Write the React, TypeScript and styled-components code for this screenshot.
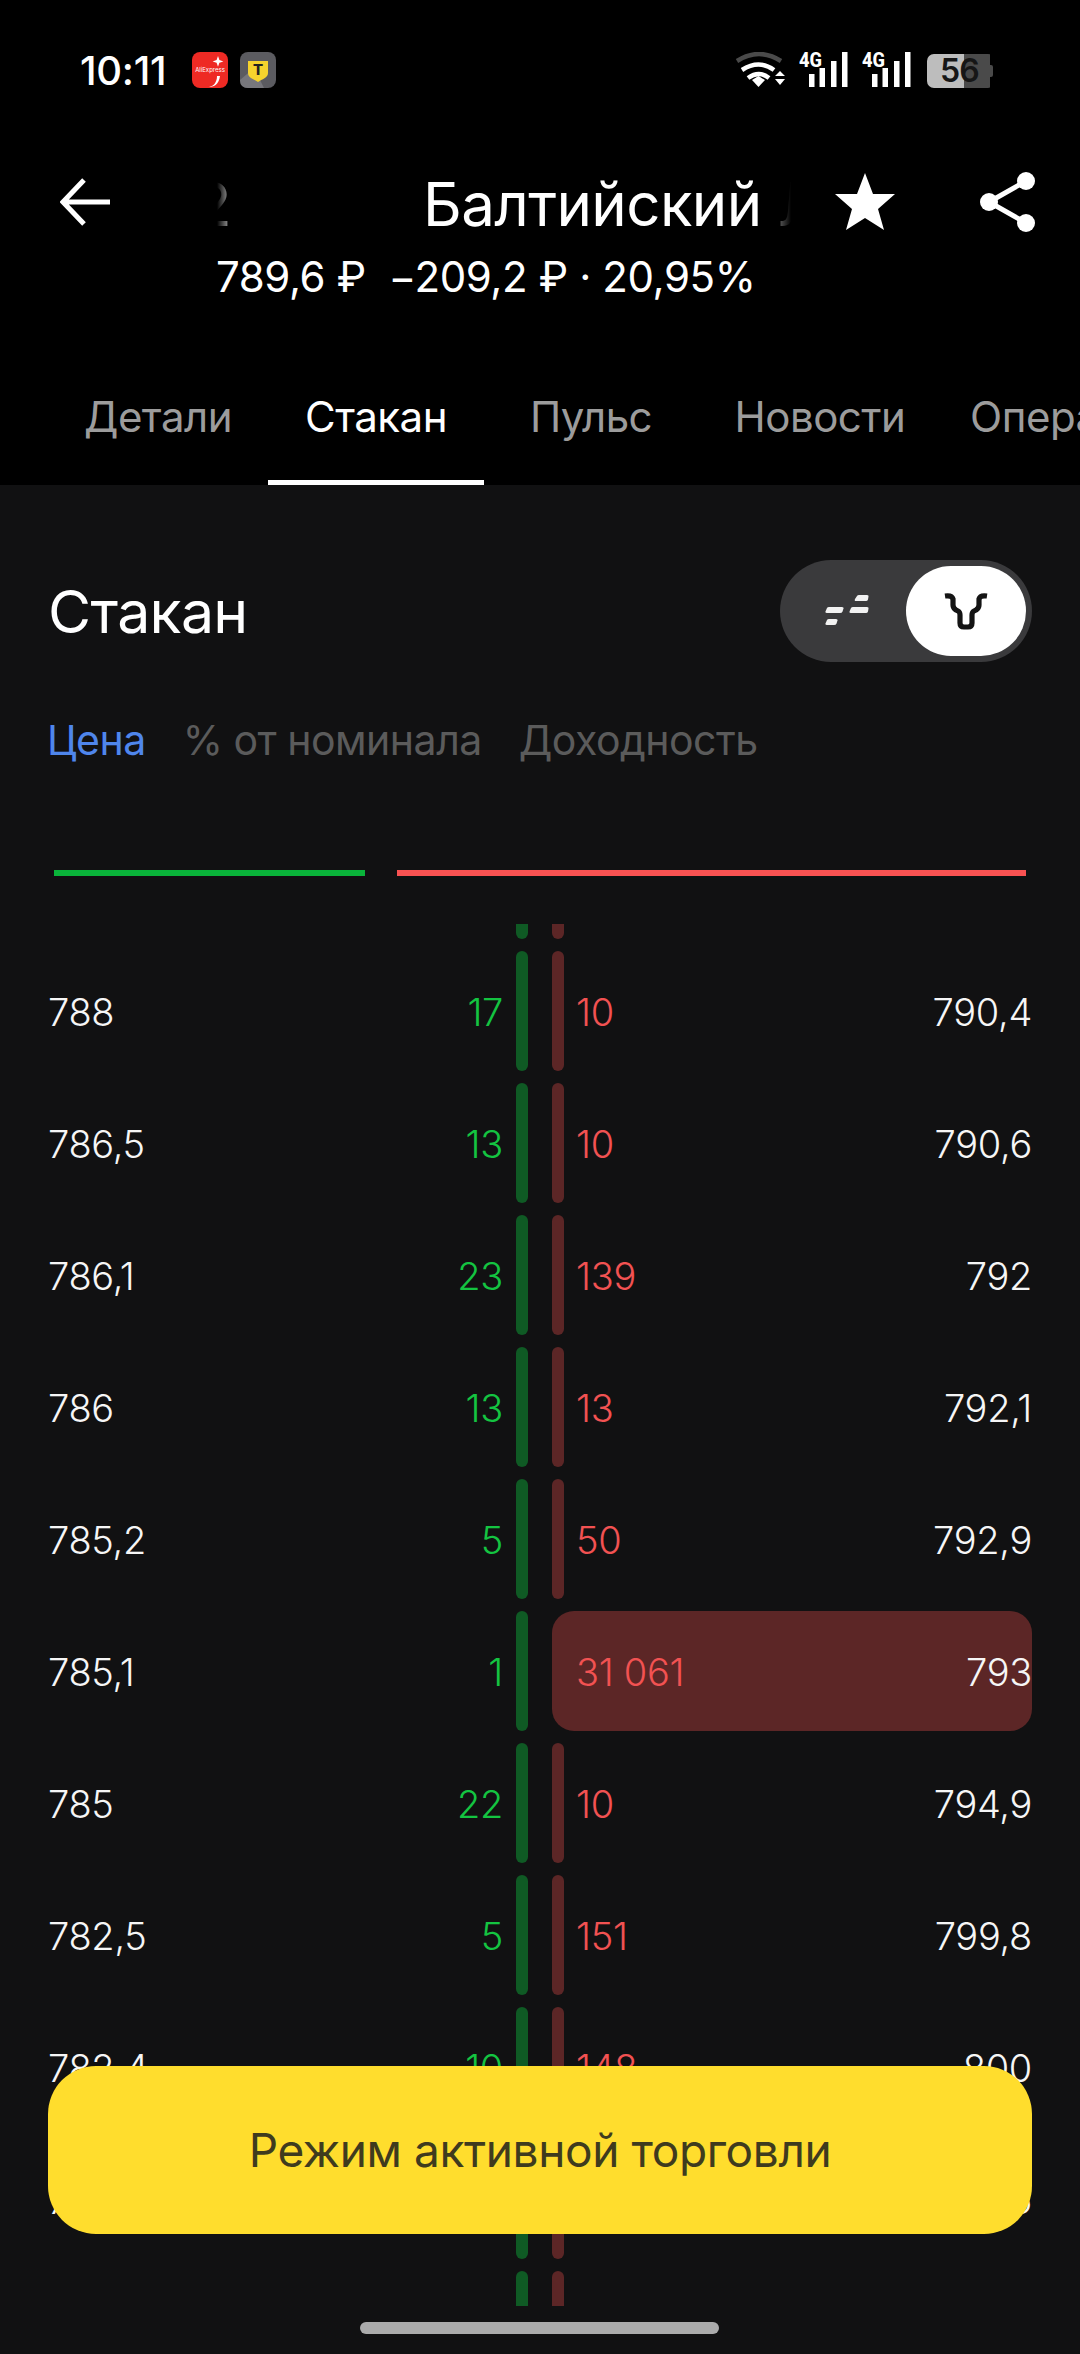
import React from "react"
import styled, { createGlobalStyle } from "styled-components"

const GlobalStyle = createGlobalStyle`
  html, body {
    margin: 0;
    padding: 0;
    background: #111112;
  }
  * { box-sizing: border-box; }
`

const Page = styled.div`
  position: relative;
  width: 1080px;
  height: 2354px;
  overflow: hidden;
  background: #111112;
  color: #fff;
  font-family: Inter, "Noto Sans", sans-serif;
`

const Header = styled.header`
  height: 485px;
  background: #000;
  display: flex;
  flex-direction: column;
`

const StatusBar = styled.div`
  height: 52px;
  margin-top: 52px;
  padding: 0 87px 0 80px;
  display: flex;
  align-items: flex-start;
  justify-content: space-between;
`

const StatusLeft = styled.div`
  display: flex;
  align-items: center;
  height: 36px;
`

const Clock = styled.span`
  width: 112px;
  font-size: 40px;
  font-weight: 500;
  letter-spacing: -0.3px;
`

const NotifyIcons = styled.div`
  display: flex;
  gap: 12px;
`

const StatusRight = styled.div`
  display: flex;
  align-items: flex-start;
  height: 36px;
  gap: 14px;
`

const Battery = styled.div`
  position: relative;
  width: 66px;
  height: 34px;
  margin-top: 2px;
  margin-left: 2px;
  border-radius: 7px 5px 5px 7px;
  background: linear-gradient(90deg, #bdbdbd 0 37px, #4a4a4a 37px 63px, transparent 63px);
  color: #161616;
  font-size: 32px;
  font-weight: 600;
  line-height: 34px;
  padding-left: 13px;
  letter-spacing: -1px;
  &::after {
    content: "";
    position: absolute;
    right: 0;
    top: 11px;
    width: 3px;
    height: 12px;
    border-radius: 0 2px 2px 0;
    background: #4a4a4a;
  }
`

const TopBar = styled.div`
  height: 84px;
  margin-top: 56px;
  display: flex;
  align-items: center;
  padding: 0 44px 0 60px;
`

const IconSlot = styled.div<{ $left: number }>`
  flex: none;
  display: flex;
  margin-left: ${p => p.$left}px;
`

const Marquee = styled.div`
  width: 574px;
  margin-left: 107px;
  height: 84px;
  padding-top: 4px;
  flex: none;
  overflow: hidden;
  white-space: nowrap;
  display: flex;
  align-items: center;
  font-size: 60px;
  font-weight: 400;
  letter-spacing: -0.6px;
  mask-image: linear-gradient(90deg, transparent 0, #000 20px, #000 540px, transparent 574px);
  -webkit-mask-image: linear-gradient(90deg, transparent 0, #000 20px, #000 540px, transparent 574px);
`

const MarqueeTail = styled.span`
  margin-left: -22px;
  margin-right: 192px;
`

const PriceLine = styled.div`
  margin: 7px 0 0 216px;
  height: 50px;
  display: flex;
  align-items: center;
  font-size: 42px;
  font-weight: 400;
  letter-spacing: -0.4px;
  white-space: pre;
`

const TabBar = styled.nav`
  margin-top: auto;
  height: 94px;
  display: flex;
  overflow: hidden;
  padding-left: 48px;
  white-space: nowrap;
`

const TabItem = styled.div<{ $active?: boolean; $width: number }>`
  flex: none;
  width: ${p => p.$width}px;
  height: 94px;
  padding-top: 2px;
  text-align: center;
  font-size: 42px;
  line-height: 48px;
  letter-spacing: -0.5px;
  color: ${p => (p.$active ? "#fff" : "#9c9c9c")};
  border-bottom: 5px solid ${p => (p.$active ? "#fff" : "transparent")};
`

const TitleRow = styled.div`
  margin-top: 75px;
  padding: 0 48px;
  height: 102px;
  display: flex;
  align-items: center;
  justify-content: space-between;
`

const Title = styled.h1`
  margin: 0;
  font-size: 59px;
  font-weight: 400;
  letter-spacing: -0.7px;
`

const Toggle = styled.div`
  width: 252px;
  height: 102px;
  border-radius: 51px;
  background: #3a3a3c;
  display: flex;
  align-items: center;
  justify-content: space-between;
  padding: 0 6px 0 45px;
`

const ToggleKnob = styled.div`
  width: 120px;
  height: 90px;
  border-radius: 45px;
  background: #fff;
  display: flex;
  align-items: center;
  justify-content: center;
`

const ModeRow = styled.div`
  margin-top: 53px;
  padding-left: 47px;
  height: 50px;
  display: flex;
  align-items: center;
  gap: 37px;
  font-size: 41px;
  letter-spacing: -0.5px;
`

const ModeItem = styled.span<{ $active?: boolean }>`
  color: ${p => (p.$active ? "#4f86ec" : "#5b5b5b")};
`

const Ratio = styled.div`
  margin: 105px 54px 0;
  display: flex;
  gap: 32px;
`

const RatioBar = styled.div<{ $color: string; $width: number }>`
  width: ${p => p.$width}px;
  height: 6px;
  background: ${p => p.$color};
`

const BookViewport = styled.div`
  margin-top: 48px;
  height: 1382px;
  overflow: hidden;
`

const BookScroll = styled.div`
  margin-top: -111px;
`

const BookRow = styled.div`
  height: 132px;
  padding: 0 48px;
  display: grid;
  grid-template-columns: 1fr 1fr;
  column-gap: 24px;
  font-size: 38px;
  font-weight: 350;
  letter-spacing: -0.3px;
`

const BidSide = styled.div`
  display: flex;
  align-items: center;
`

const AskSide = styled.div`
  position: relative;
  display: flex;
  align-items: center;
  justify-content: space-between;
  padding-left: 24px;
`

const Price = styled.span`
  position: relative;
  padding-top: 2px;
  color: #f6f6f6;
`

const BidQty = styled.span`
  margin-left: auto;
  margin-right: 13px;
  padding-top: 2px;
  color: #14c441;
`

const AskQty = styled.span`
  position: relative;
  padding-top: 2px;
  color: #f25252;
`

const BidBar = styled.div`
  width: 12px;
  height: 120px;
  border-radius: 6px;
  background: #0f5a24;
`

const AskDepth = styled.div<{ $wide?: boolean }>`
  position: absolute;
  left: 0;
  top: 6px;
  height: 120px;
  width: ${p => (p.$wide ? "100%" : "12px")};
  border-radius: ${p => (p.$wide ? "22px" : "6px")};
  background: #5c2626;
`

const TradeButton = styled.button`
  position: absolute;
  left: 48px;
  bottom: 120px;
  width: 984px;
  height: 168px;
  border: 0;
  border-radius: 48px;
  background: #ffdd2d;
  color: #3f3b1e;
  font-family: inherit;
  font-size: 46px;
  letter-spacing: -0.4px;
`

const HomeIndicator = styled.div`
  position: absolute;
  left: 360px;
  bottom: 20px;
  width: 359px;
  height: 12px;
  border-radius: 6px;
  background: #ababab;
`

type RowType = {
  bidPrice: string,
  bidQty: string,
  askQty: string,
  askPrice: string,
  wide?: boolean,
}

const rows: RowType[] = [
  { bidPrice: "", bidQty: "", askQty: "", askPrice: "" },
  { bidPrice: "788", bidQty: "17", askQty: "10", askPrice: "790,4" },
  { bidPrice: "786,5", bidQty: "13", askQty: "10", askPrice: "790,6" },
  { bidPrice: "786,1", bidQty: "23", askQty: "139", askPrice: "792" },
  { bidPrice: "786", bidQty: "13", askQty: "13", askPrice: "792,1" },
  { bidPrice: "785,2", bidQty: "5", askQty: "50", askPrice: "792,9" },
  { bidPrice: "785,1", bidQty: "1", askQty: "31 061", askPrice: "793", wide: true },
  { bidPrice: "785", bidQty: "22", askQty: "10", askPrice: "794,9" },
  { bidPrice: "782,5", bidQty: "5", askQty: "151", askPrice: "799,8" },
  { bidPrice: "782,4", bidQty: "10", askQty: "148", askPrice: "800" },
  { bidPrice: "782", bidQty: "", askQty: "", askPrice: "800,5" },
  { bidPrice: "", bidQty: "", askQty: "", askPrice: "" },
]

const tabs = [
  { name: "Детали", width: 220 },
  { name: "Стакан", width: 216, active: true },
  { name: "Пульс", width: 214 },
  { name: "Новости", width: 244 },
  { name: "Операции", width: 258 },
]

function AliIcon() {
  return (
    <svg width="36" height="36" viewBox="0 0 36 36">
      <rect width="36" height="36" rx="8" fill="#ee2a24" />
      <path d="M26 4 l1.4 4 4 1.4 -4 1.4 -1.4 4 -1.4 -4 -4 -1.4 4 -1.4z" fill="#fff" />
      <text x="18" y="20" fontSize="6" fill="#fff" textAnchor="middle" fontFamily="Inter, sans-serif">AliExpress</text>
      <path d="M25 24 C25 30 22 34 17 35 C21 35 27 33 28 24z" fill="#fff" />
    </svg>
  )
}

function BankIcon() {
  return (
    <svg width="36" height="36" viewBox="0 0 36 36">
      <rect width="36" height="36" rx="8" fill="#5b5b60" />
      <path d="M0 28 L14 16 L24 36 H8 Q0 36 0 28z" fill="#77777c" />
      <path d="M8 9 H28 V21 C28 26 22 27 18 30 C14 27 8 26 8 21z" fill="#f6d32d" />
      <text x="18" y="23" fontSize="15" fontWeight="800" fill="#222" textAnchor="middle" fontFamily="Inter, sans-serif">T</text>
    </svg>
  )
}

function WifiIcon() {
  return (
    <svg width="50" height="36" viewBox="0 0 50 36" fill="none">
      <path d="M2 9 Q24 -5 46 9" stroke="#4a4a4a" strokeWidth="4.5" />
      <path d="M7 18 Q24 7 39 18" stroke="#fff" strokeWidth="4.5" />
      <path d="M13 26 Q24 18 34 26" stroke="#fff" strokeWidth="4.5" />
      <path d="M17 28 L23.5 24 L30 28 L23.5 35z" fill="#fff" />
      <path d="M40 24 L45 19 L50 24z M40 27 H50 L45 33z" fill="#fff" />
    </svg>
  )
}

function SignalIcon() {
  return (
    <svg width="49" height="36" viewBox="0 0 49 36">
      <text x="0" y="15" fontSize="20" fontWeight="800" fill="#fff" fontFamily="Roboto, sans-serif" textLength="23" lengthAdjust="spacingAndGlyphs">4G</text>
      <rect x="10" y="22" width="5.5" height="13" fill="#fff" />
      <rect x="20.5" y="16" width="5.5" height="19" fill="#fff" />
      <rect x="32" y="9" width="5.5" height="26" fill="#fff" />
      <rect x="43" y="0" width="5.5" height="35" fill="#fff" />
    </svg>
  )
}

function BackIcon() {
  return (
    <svg width="50" height="50" viewBox="0 0 50 50" fill="none" stroke="#fff" strokeWidth="5">
      <path d="M50 25 H4 M24 3 L3 25 L24 47" />
    </svg>
  )
}

function StarIcon() {
  return (
    <svg width="60" height="58" viewBox="0 0 60 58">
      <path d="M30 0 L38 21 L60 21 L43 36 L49 57 L30 45 L11 57 L17 36 L0 21 L22 21z" fill="#fff" />
    </svg>
  )
}

function ShareIcon() {
  return (
    <svg width="56" height="60" viewBox="0 0 56 60" fill="none">
      <path d="M47 9 L10 30 L47 51" stroke="#fff" strokeWidth="5" />
      <circle cx="47" cy="9" r="9" fill="#fff" />
      <circle cx="10" cy="30" r="9" fill="#fff" />
      <circle cx="47" cy="51" r="9" fill="#fff" />
    </svg>
  )
}

function DashIcon() {
  return (
    <svg width="44" height="32" viewBox="0 0 44 32" fill="#f2f2f2">
      <path d="M2 13 Q2.5 12 4 12 H17 Q19 12 18.5 13.5 L17.5 16.5 Q17 18 15 18 H2 Q0 18 0.5 16.5z" />
      <path d="M2 25 Q2.5 24 4 24 H11 Q13 24 12.5 25.5 L11.5 28.5 Q11 30 9 30 H2 Q0 30 0.5 28.5z" />
      <path d="M26 13 Q26.5 12 28 12 H42 Q44 12 43.5 13.5 L43 16.5 Q42.5 18 41 18 H26 Q24 18 24.5 16.5z" />
      <path d="M32 1 Q32.5 0 34 0 H42 Q44 0 43.5 1.5 L43 4.5 Q42.5 6 41 6 H31 Q29 6 30 4z" />
    </svg>
  )
}

function BullIcon() {
  return (
    <svg width="44" height="38" viewBox="0 0 44 38" fill="none" stroke="#141414" strokeWidth="5.2">
      <path d="M1 4 Q8 3 9 7 V13 Q9 16 12 18 L14 19 Q16 20 16 23 V31 Q16 35 20 35 H24 Q28 35 28 31 V23 Q28 20 30 19 L32 18 Q35 16 35 13 V7 Q36 3 43 4" />
    </svg>
  )
}

export default function App() {
  return (
    <Page>
      <GlobalStyle />
      <Header>
        <StatusBar>
          <StatusLeft>
            <Clock>10:11</Clock>
            <NotifyIcons>
              <AliIcon />
              <BankIcon />
            </NotifyIcons>
          </StatusLeft>
          <StatusRight>
            <WifiIcon />
            <SignalIcon />
            <SignalIcon />
            <Battery>56</Battery>
          </StatusRight>
        </StatusBar>
        <TopBar>
          <IconSlot $left={0}><BackIcon /></IconSlot>
          <Marquee>
            <MarqueeTail>2</MarqueeTail>
            <span>Балтийский Л</span>
          </Marquee>
          <IconSlot $left={44}><StarIcon /></IconSlot>
          <IconSlot $left={84}><ShareIcon /></IconSlot>
        </TopBar>
        <PriceLine>{"789,6 ₽  −209,2 ₽ · 20,95%"}</PriceLine>
        <TabBar>
          {tabs.map(tab => (
            <TabItem key={tab.name} $active={tab.active} $width={tab.width}>{tab.name}</TabItem>
          ))}
        </TabBar>
      </Header>
      <TitleRow>
        <Title>Стакан</Title>
        <Toggle>
          <DashIcon />
          <ToggleKnob><BullIcon /></ToggleKnob>
        </Toggle>
      </TitleRow>
      <ModeRow>
        <ModeItem $active>Цена</ModeItem>
        <ModeItem>% от номинала</ModeItem>
        <ModeItem>Доходность</ModeItem>
      </ModeRow>
      <Ratio>
        <RatioBar $color="#0ab43a" $width={311} />
        <RatioBar $color="#f95252" $width={629} />
      </Ratio>
      <BookViewport>
        <BookScroll>
          {rows.map((row, i) => (
            <BookRow key={i}>
              <BidSide>
                <Price>{row.bidPrice}</Price>
                <BidQty>{row.bidQty}</BidQty>
                <BidBar />
              </BidSide>
              <AskSide>
                <AskDepth $wide={row.wide} />
                <AskQty>{row.askQty}</AskQty>
                <Price>{row.askPrice}</Price>
              </AskSide>
            </BookRow>
          ))}
        </BookScroll>
      </BookViewport>
      <TradeButton>Режим активной торговли</TradeButton>
      <HomeIndicator />
    </Page>
  )
}
